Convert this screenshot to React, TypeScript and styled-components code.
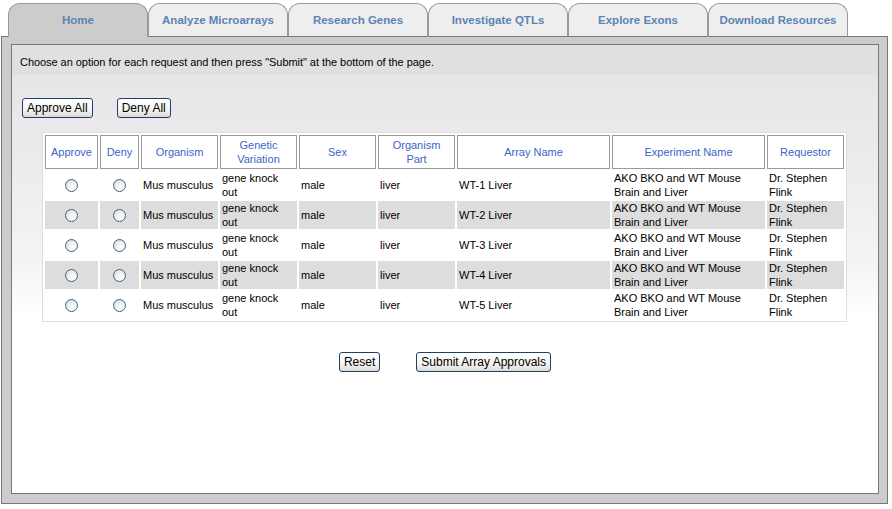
import { createGlobalStyle } from 'styled-components';
import styled from 'styled-components';

const TABS = [
  'Home',
  'Analyze Microarrays',
  'Research Genes',
  'Investigate QTLs',
  'Explore Exons',
  'Download Resources',
];

const COLUMNS = [
  { label: 'Approve', width: 53 },
  { label: 'Deny', width: 39 },
  { label: 'Organism', width: 77 },
  { label: 'Genetic Variation', width: 77 },
  { label: 'Sex', width: 77 },
  { label: 'Organism Part', width: 77 },
  { label: 'Array Name', width: 153 },
  { label: 'Experiment Name', width: 153 },
  { label: 'Requestor', width: 77 },
];

const REQUESTS = [1, 2, 3, 4, 5].map((n) => ({
  id: n,
  organism: 'Mus musculus',
  variation: 'gene knock out',
  sex: 'male',
  part: 'liver',
  array: `WT-${n} Liver`,
  experiment: 'AKO BKO and WT Mouse Brain and Liver',
  requestor: 'Dr. Stephen Flink',
}));

const GlobalStyle = createGlobalStyle`
  html, body {
    margin: 0;
    padding: 0;
    background: #fff;
    font-family: "Liberation Sans", Arial, sans-serif;
  }
`;

const Page = styled.div`
  width: 887px;
  padding: 3px 0 0 1px;
`;

const TabBar = styled.div`
  display: flex;
  padding-left: 7px;
  position: relative;
  z-index: 1;
  margin-bottom: -1px;
`;

const Tab = styled.div<{ $active?: boolean }>`
  width: 138px;
  height: 31px;
  display: flex;
  align-items: center;
  justify-content: center;
  padding-bottom: 1px;
  box-sizing: content-box;
  border: 1px solid #999;
  border-bottom-color: ${({ $active }) => ($active ? '#cccccc' : '#777')};
  border-radius: 12px 12px 0 0;
  background: ${({ $active }) => ($active ? '#cccccc' : '#eeeeee')};
  color: #5b84b4;
  font-size: 11.5px;
  font-weight: bold;
`;

const Outer = styled.div`
  background: #cccccc;
  border: 1px solid #777;
  padding: 7px 8px 9px 9px;
`;

const Inner = styled.div`
  height: 448px;
  border: 1px solid #777;
  background: linear-gradient(
    to bottom,
    #e0e0e0 0px,
    #e0e0e0 29px,
    #e8e5e8 30px,
    #eeebee 120px,
    #f6f3f6 220px,
    #ffffff 270px
  );
  display: flex;
  flex-direction: column;
`;

const Instructions = styled.div`
  height: 29px;
  box-sizing: border-box;
  padding: 11px 0 0 8px;
  background: #e0e0e0;
  font-size: 11px;
  letter-spacing: -0.05px;
  color: #000;
`;

const ButtonRow = styled.div<{ $center?: boolean }>`
  display: flex;
  gap: ${({ $center }) => ($center ? '36px' : '24px')};
  justify-content: ${({ $center }) => ($center ? 'center' : 'flex-start')};
  padding: ${({ $center }) => ($center ? '30px 0 0' : '24px 0 0 10px')};
`;

const Button = styled.button`
  height: 20px;
  padding: 0 4px;
  border: 1px solid #1d3f6e;
  border-radius: 3px;
  background: linear-gradient(to bottom, #ffffff 0%, #f4f4f0 60%, #dcdad2 100%);
  font-family: "Liberation Sans", Arial, sans-serif;
  font-size: 12px;
  color: #000;
  cursor: pointer;
`;

const TableWrap = styled.div`
  display: flex;
  justify-content: center;
  padding: 14px 1px 0 0;
`;

const Table = styled.table`
  table-layout: fixed;
  border-collapse: separate;
  border-spacing: 2px;
  border: 1px solid #dddddd;
  background: #fff;
  font-size: 11px;
`;

const HeadCell = styled.th`
  height: 32px;
  padding: 0 5px;
  border: 1px solid #999;
  font-weight: normal;
  color: #3a66c4;
  line-height: 14px;
  text-align: center;
`;

const Row = styled.tr<{ $shaded: boolean }>`
  background: ${({ $shaded }) => ($shaded ? '#dddddd' : '#ffffff')};
`;

const Cell = styled.td<{ $center?: boolean }>`
  height: 28px;
  padding: 0 2px;
  line-height: 14px;
  color: #000;
  text-align: ${({ $center }) => ($center ? 'center' : 'left')};
  vertical-align: middle;
`;

const Radio = styled.input`
  appearance: none;
  width: 13px;
  height: 13px;
  margin: 3px 0 0;
  border: 1px solid #3a6690;
  border-radius: 50%;
  background: radial-gradient(circle at 65% 70%, #ffffff 0%, #f2f2ee 40%, #d6d6cf 100%);
  cursor: pointer;
`;

export default function App() {
  return (
    <Page>
      <GlobalStyle />
      <TabBar>
        {TABS.map((t, i) => (
          <Tab key={t} $active={i === 0}>
            {t}
          </Tab>
        ))}
      </TabBar>
      <Outer>
        <Inner>
          <Instructions>
            Choose an option for each request and then press "Submit" at the bottom of the page.
          </Instructions>
          <ButtonRow>
            <Button>Approve All</Button>
            <Button>Deny All</Button>
          </ButtonRow>
          <TableWrap>
            <Table>
              <colgroup>
                {COLUMNS.map((c) => (
                  <col key={c.label} style={{ width: c.width }} />
                ))}
              </colgroup>
              <thead>
                <tr>
                  {COLUMNS.map((c) => (
                    <HeadCell key={c.label}>{c.label}</HeadCell>
                  ))}
                </tr>
              </thead>
              <tbody>
                {REQUESTS.map((r, i) => (
                  <Row key={r.id} $shaded={i % 2 === 1}>
                    <Cell $center>
                      <Radio type="radio" name={`req-${r.id}`} />
                    </Cell>
                    <Cell $center>
                      <Radio type="radio" name={`req-${r.id}`} />
                    </Cell>
                    <Cell>{r.organism}</Cell>
                    <Cell>{r.variation}</Cell>
                    <Cell>{r.sex}</Cell>
                    <Cell>{r.part}</Cell>
                    <Cell>{r.array}</Cell>
                    <Cell>{r.experiment}</Cell>
                    <Cell>{r.requestor}</Cell>
                  </Row>
                ))}
              </tbody>
            </Table>
          </TableWrap>
          <ButtonRow $center>
            <Button>Reset</Button>
            <Button>Submit Array Approvals</Button>
          </ButtonRow>
        </Inner>
      </Outer>
    </Page>
  );
}
